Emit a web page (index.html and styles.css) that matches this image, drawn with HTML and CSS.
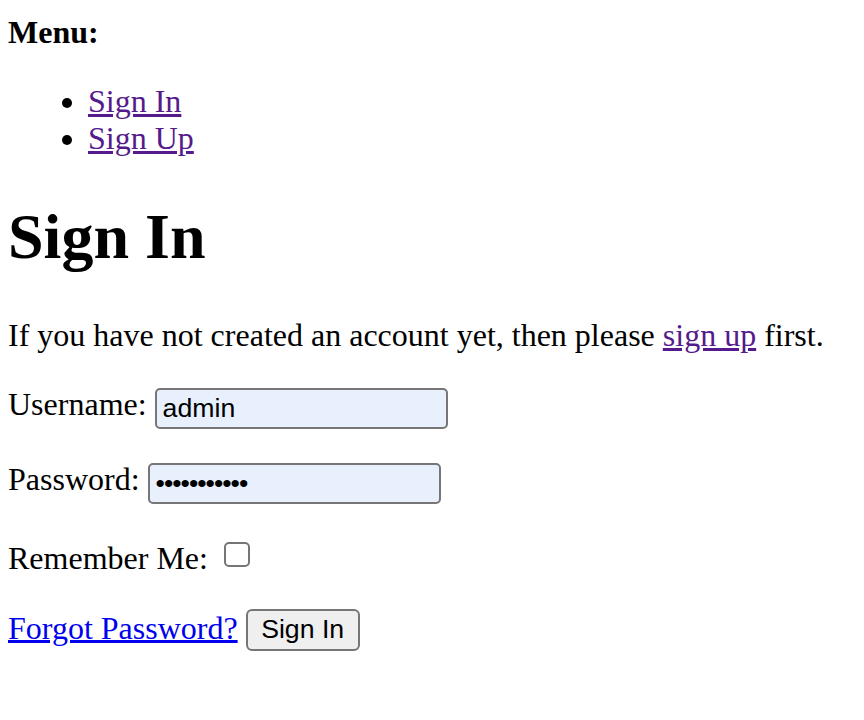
FILE: index.html
```html
<!DOCTYPE html>
<html>
<head>
<meta charset="utf-8">
<title>Sign In</title>
<link rel="stylesheet" href="styles.css">
</head>
<body>
<div class="menu-title"><b>Menu:</b></div>
<ul class="menu">
  <li><a class="visited" href="#signin">Sign In</a></li>
  <li><a class="visited" href="#signup">Sign Up</a></li>
</ul>
<h1 class="page-title">Sign In</h1>
<p class="row">If you have not created an account yet, then please <a class="visited" href="#signup">sign up</a> first.</p>
<form class="signin-form" onsubmit="return false">
  <p class="row"><label for="username">Username:</label> <input class="field" id="username" type="text" value="admin"></p>
  <p class="row"><label for="password">Password:</label> <input class="field field-password" id="password" type="password" value="abcdefghijk"></p>
  <p class="row"><label for="remember">Remember Me:</label> <input class="check" id="remember" type="checkbox"></p>
  <p class="row"><a class="link" href="#forgot">Forgot Password?</a> <button class="btn" type="submit">Sign In</button></p>
</form>
</body>
</html>
```
FILE: styles.css
```css
html {
  background: #ffffff;
}
body {
  margin: 14px 8px 8px 8px;
  font-family: "Liberation Serif", "Times New Roman", serif;
  font-size: 32px;
  color: #000000;
}
.menu-title {
  margin: 0;
}
.menu {
  margin: 32px 0;
  padding-left: 80px;
}
.page-title {
  font-size: 64px;
  font-weight: bold;
  margin: 42.88px 0;
}
.row {
  margin: 32px 0;
}
.signin-form {
  margin: 0;
}
a.visited {
  color: #551a8b;
}
a.link {
  color: #0000ee;
}
.field {
  box-sizing: border-box;
  width: 293px;
  height: 41px;
  margin: 0;
  padding: 2px 6px;
  font-family: "Liberation Sans", Arial, sans-serif;
  font-size: 26.67px;
  color: #000000;
  background: #e8f0fe;
  border: 2px solid #767676;
  border-radius: 5px;
  outline: none;
  vertical-align: -2px;
}
.field-password {
  letter-spacing: -1px;
}
.check {
  -webkit-appearance: none;
  appearance: none;
  box-sizing: border-box;
  width: 26px;
  height: 25px;
  margin: 6px 6px 2px 8px;
  border: 2px solid #767676;
  border-radius: 5px;
  background: #ffffff;
  vertical-align: baseline;
}
.btn {
  box-sizing: border-box;
  width: 114px;
  height: 42px;
  margin: 0;
  padding: 2px 12px;
  font-family: "Liberation Sans", Arial, sans-serif;
  font-size: 26.67px;
  color: #000000;
  background: #efefef;
  border: 2px solid #767676;
  border-radius: 6px;
}
```
